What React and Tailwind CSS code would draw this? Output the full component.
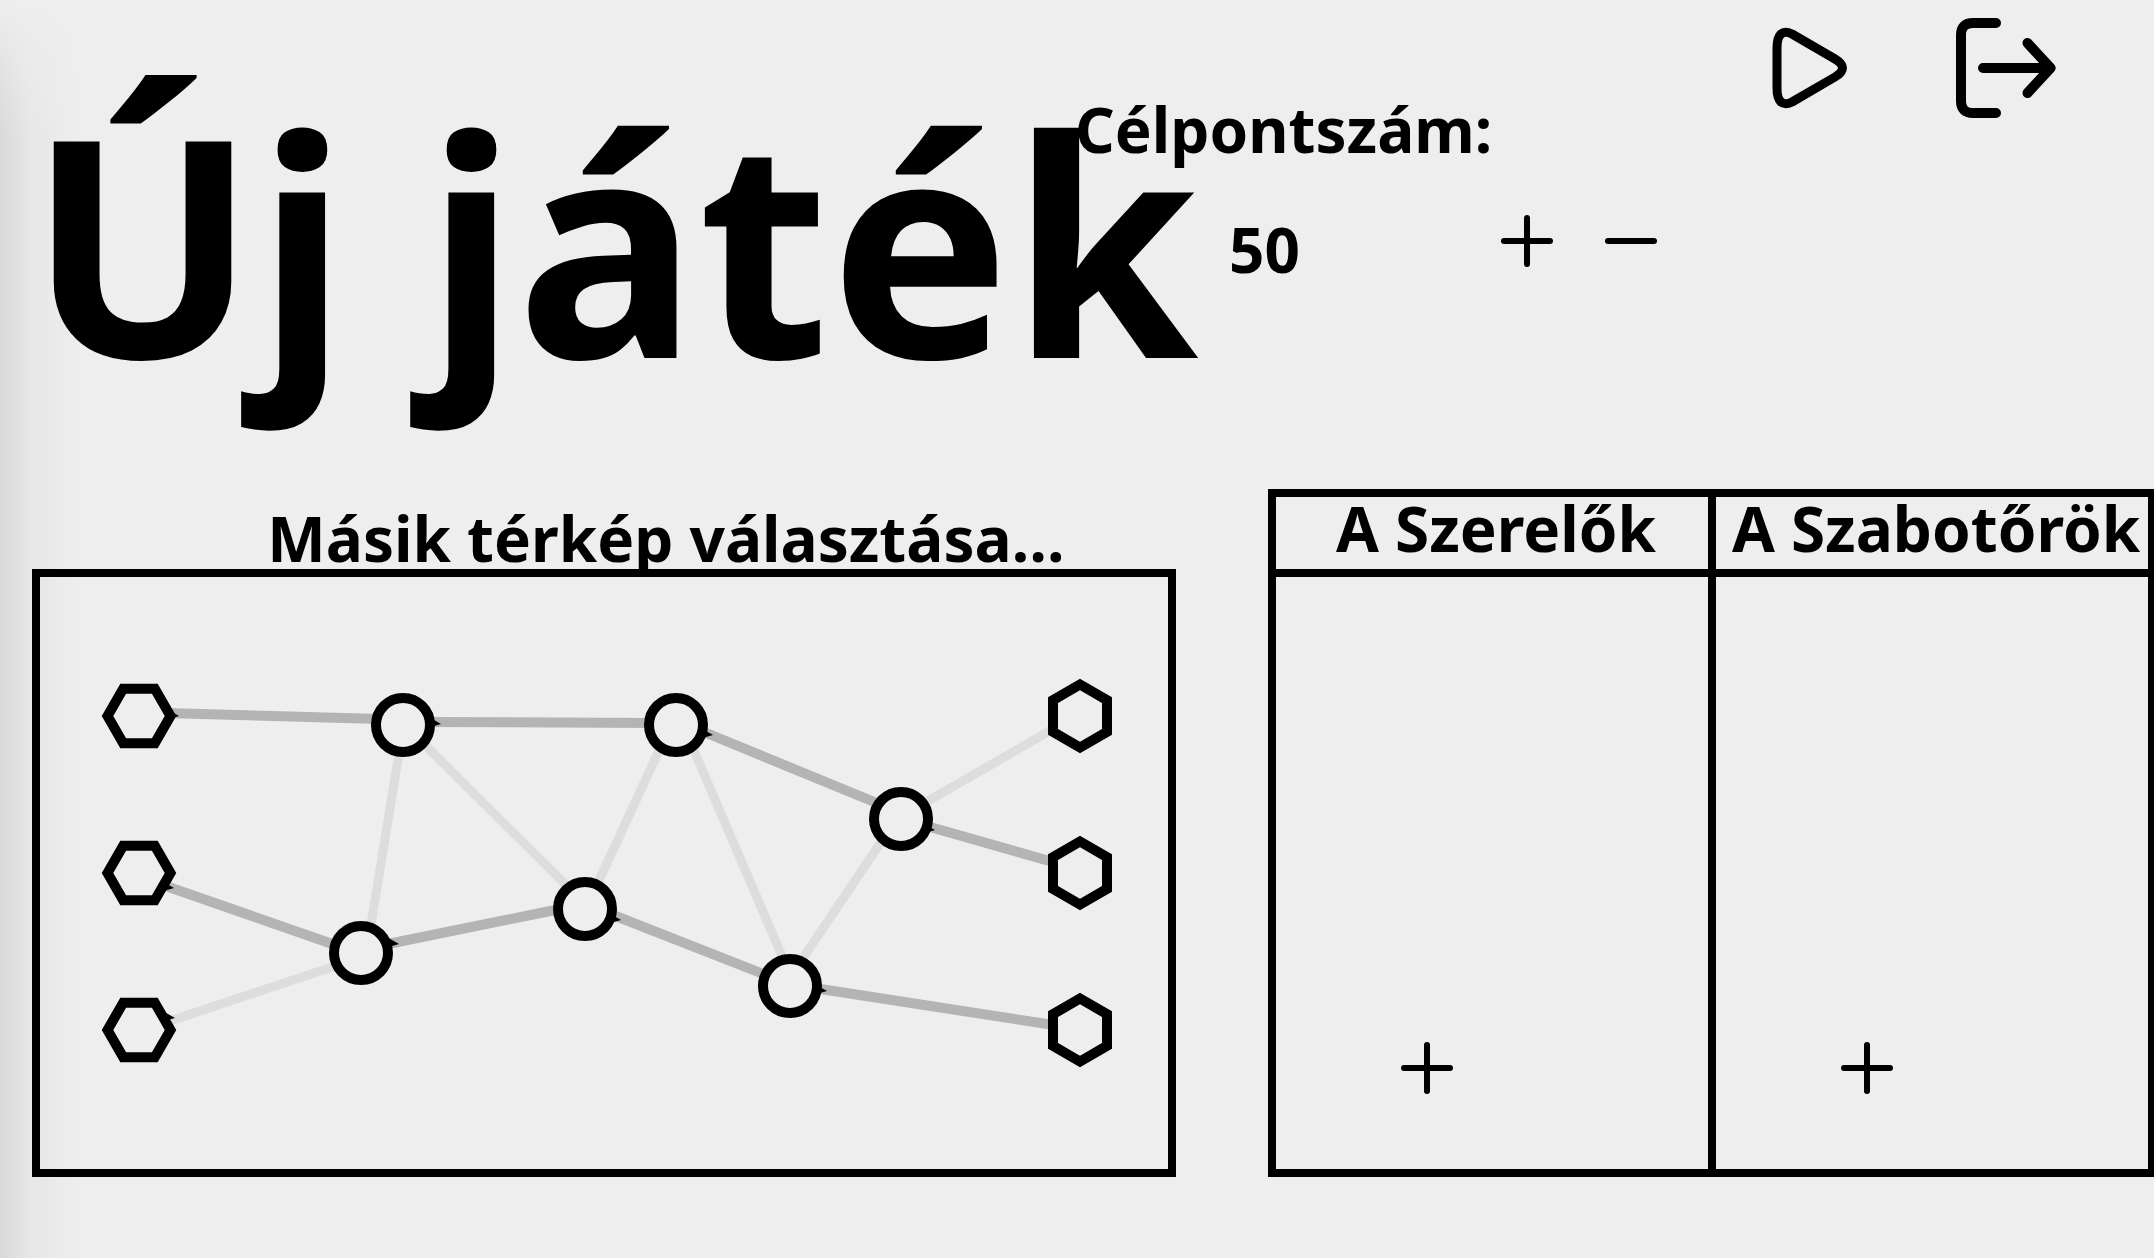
import React, { useState } from 'react';

const LINK_DARK = [
  [165, 712, 380, 718],
  [425, 721, 655, 722],
  [160, 883, 341, 946],
  [383, 944, 565, 907],
  [608, 912, 771, 976],
  [814, 987, 1060, 1025],
  [699, 729, 884, 805],
  [923, 824, 1060, 863],
];

const LINK_LIGHT = [
  [164, 1022, 341, 963],
  [400, 746, 370, 930],
  [421, 740, 570, 888],
  [662, 743, 596, 886],
  [692, 745, 785, 962],
  [885, 835, 799, 963],
  [921, 804, 1060, 724],
];

const PUMPS = [
  [403, 724],
  [676, 724],
  [585, 908],
  [361, 952],
  [901, 818],
  [790, 985],
];

const ROWS = [715, 872, 1029];

/* Outlet markers: the tip of each small triangle */
const OUTLETS = [
  [179, 715],
  [174, 887],
  [175, 1017],
  [441, 723],
  [399, 943],
  [621, 919],
  [713, 734],
  [935, 829],
  [827, 990],
];

function NetworkMap() {
  return (
    <svg viewBox="40 576 1128 592" className="block w-full" role="img" aria-label="Térkép">
      <g stroke="#dddddd" strokeWidth="9">
        {LINK_LIGHT.map(([x1, y1, x2, y2]) => (
          <line key={`${x1}-${y1}`} x1={x1} y1={y1} x2={x2} y2={y2} />
        ))}
      </g>
      <g stroke="#b4b4b4" strokeWidth="10">
        {LINK_DARK.map(([x1, y1, x2, y2]) => (
          <line key={`${x1}-${y1}`} x1={x1} y1={y1} x2={x2} y2={y2} />
        ))}
      </g>
      {OUTLETS.map(([x, y]) => (
        <polygon key={`${x}-${y}`} points={`${x},${y} ${x - 14},${y - 8} ${x - 14},${y + 4}`} />
      ))}
      <g fill="#eeeeee" stroke="#000" strokeWidth="10">
        {ROWS.map((y) => (
          <polygon
            key={y}
            points={`107.5,${y} 123.2,${y - 27.3} 154.8,${y - 27.3} 170.5,${y} 154.8,${y + 27.3} 123.2,${y + 27.3}`}
          />
        ))}
        {ROWS.map((y) => (
          <polygon
            key={y}
            points={`1080,${y - 31.5} 1107,${y - 15.8} 1107,${y + 15.8} 1080,${y + 31.5} 1053,${y + 15.8} 1053,${y - 15.8}`}
          />
        ))}
        {PUMPS.map(([x, y]) => (
          <circle key={`${x}-${y}`} cx={x} cy={y} r="27" />
        ))}
      </g>
    </svg>
  );
}

function SignIcon({ plus }) {
  return (
    <svg viewBox="0 0 60 60" className="size-15" stroke="#000" strokeWidth="6" strokeLinecap="round" aria-hidden="true">
      <path d={plus ? 'M7 30H53M30 7V53' : 'M7 30H53'} />
    </svg>
  );
}

function PlayIcon() {
  return (
    <svg viewBox="0 0 100 100" className="size-25" fill="none" stroke="#000" strokeWidth="9" strokeLinejoin="round" aria-hidden="true">
      <path d="M21 30C21 17 26 11 36 16L79 41Q94 50 79 59L36 84C26 89 21 83 21 70Z" />
    </svg>
  );
}

function ExitIcon() {
  return (
    <svg viewBox="0 0 100 100" className="size-25" fill="none" stroke="#000" strokeWidth="10" strokeLinecap="round" strokeLinejoin="round" aria-hidden="true">
      <path d="M40 5H17C9 5 5 9 5 17V83C5 91 9 95 17 95H40" />
      <path d="M27 50H94M71.5 25L94.5 50L71.5 75" />
    </svg>
  );
}

function TeamPanel({ title, className = '' }) {
  return (
    <section className={`flex min-w-0 flex-1 flex-col border-8 border-black ${className}`}>
      <h2 className="h-20 border-b-8 border-black pl-2 text-center text-[62px] leading-[62px] font-bold whitespace-nowrap">
        {title}
      </h2>
      <div className="flex flex-1 items-end pb-[71px] pl-[121px]">
        <button type="button" aria-label={`Hozzáadás: ${title}`}>
          <SignIcon plus />
        </button>
      </div>
    </section>
  );
}

export default function App() {
  const [target, setTarget] = useState(50);

  return (
    <div className="relative min-h-screen overflow-hidden bg-[#eeeeee] font-['Noto_Sans',sans-serif] text-black">
      <header className="flex items-start pr-[98px] pb-[97px] pl-7">
        <h1 className="mt-[89px] w-[1047px] shrink-0 text-[303px] leading-[303px] font-bold whitespace-nowrap">
          Új játék
        </h1>
        <div className="mt-[98px] shrink-0 text-[62px] leading-[62px] font-bold">
          <p id="target-label">Célpontszám:</p>
          <div className="mt-[51px] flex items-start pl-[154px]">
            <output aria-labelledby="target-label" className="mt-[7px] w-[268px]">
              {target}
            </output>
            <div className="flex gap-11">
              <button type="button" aria-label="Növelés" onClick={() => setTarget(target + 1)}>
                <SignIcon plus />
              </button>
              <button type="button" aria-label="Csökkentés" onClick={() => setTarget(target - 1)}>
                <SignIcon />
              </button>
            </div>
          </div>
        </div>
        <nav className="mt-[18px] ml-auto flex gap-25">
          <button type="button" aria-label="Indítás">
            <PlayIcon />
          </button>
          <button type="button" aria-label="Kilépés">
            <ExitIcon />
          </button>
        </nav>
      </header>

      <main className="-mr-0.5 grid grid-cols-[1144fr_888fr] gap-x-[92px] pl-8">
        <section className="flex min-w-0 flex-col">
          <button
            type="button"
            className="flex h-20 items-end justify-center pl-[124px] text-[62px] leading-[62px] font-bold whitespace-nowrap"
          >
            Másik térkép választása…
          </button>
          <div className="border-8 border-black">
            <NetworkMap />
          </div>
        </section>
        <div className="flex">
          <TeamPanel title="A Szerelők" />
          <TeamPanel title="A Szabotőrök" className="-ml-2" />
        </div>
      </main>

      <div className="pointer-events-none absolute inset-y-0 left-0 w-20 bg-linear-to-r from-black/9 via-black/3 via-35% to-transparent mask-t-from-[calc(100%-140px)]" />
    </div>
  );
}
